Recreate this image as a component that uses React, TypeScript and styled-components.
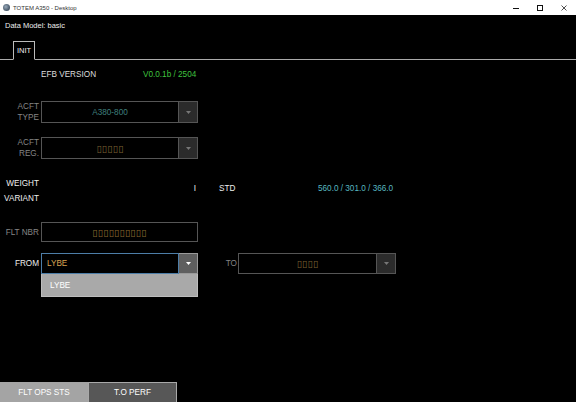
import styled, { createGlobalStyle } from "styled-components";

const GlobalStyle = createGlobalStyle`
  html, body {
    margin: 0;
    padding: 0;
    background: #000;
  }
  body {
    font-family: "Liberation Sans", Arial, sans-serif;
    font-size: 8.2px;
  }
`;

const Window = styled.div`
  width: 576px;
  height: 100vh;
  display: flex;
  flex-direction: column;
  background: #000;
  color: #eee;
  overflow: hidden;
`;

const TitleBar = styled.div`
  height: 15px;
  flex: none;
  display: flex;
  align-items: center;
  background: #fff;
  color: #333;
  font-size: 6px;
`;

const AppIcon = styled.span`
  width: 7px;
  height: 7px;
  margin: 0 3px 0 3px;
  border-radius: 50%;
  background: radial-gradient(circle at 40% 40%, #9ab 0, #456 70%);
`;

const Controls = styled.div`
  margin-left: auto;
  display: flex;
`;

const Control = styled.span`
  width: 24px;
  height: 15px;
  display: flex;
  align-items: center;
  justify-content: center;
`;

const Header = styled.div`
  height: 20px;
  flex: none;
  display: flex;
  align-items: center;
  padding-left: 5px;
  font-size: 7.5px;
`;

const TabStrip = styled.div`
  flex: none;
  display: flex;
  margin-top: 6px;
  padding-left: 13px;
  border-bottom: 1px solid #aaa;
`;

const Tab = styled.div`
  width: 20px;
  height: 17px;
  margin-bottom: -1px;
  display: flex;
  align-items: center;
  justify-content: center;
  border: 1px solid #bbb;
  border-bottom: 1px solid #000;
  background: #000;
  font-size: 7.5px;
`;

const Form = styled.div`
  display: flex;
  flex-direction: column;
`;

const Row = styled.div<{ $top: number; $h: number }>`
  display: grid;
  grid-template-columns: 39px 157px 1fr;
  column-gap: 2px;
  align-items: center;
  margin-top: ${(p) => p.$top}px;
  height: ${(p) => p.$h}px;
`;

const Label = styled.div<{ $dim?: boolean }>`
  text-align: right;
  white-space: nowrap;
  line-height: ${(p) => (p.$dim ? 11 : 15)}px;
  color: ${(p) => (p.$dim ? "#858585" : "#eee")};
`;

const Version = styled.div`
  display: flex;
  align-items: center;
  color: #ddd;
`;

const VersionName = styled.span`
  width: 102px;
`;

const VersionValue = styled.span`
  color: #3fc23f;
`;

const Field = styled.div`
  position: relative;
  display: flex;
  height: 100%;
`;

const Box = styled.div<{ $active?: boolean; $left?: boolean; $color: string }>`
  flex: 1;
  display: flex;
  align-items: center;
  justify-content: ${(p) => (p.$left ? "flex-start" : "center")};
  padding-left: ${(p) => (p.$left ? 5 : 0)}px;
  border: 1px solid ${(p) => (p.$active ? "#4d7ea8" : "#555")};
  color: ${(p) => p.$color};
`;

const Placeholder = styled.span`
  font-family: "DejaVu Sans", sans-serif;
  font-size: 9.5px;
  letter-spacing: 0.2px;
`;

const DropButton = styled.div<{ $active?: boolean }>`
  width: 18px;
  display: flex;
  align-items: center;
  justify-content: center;
  background: ${(p) => (p.$active ? "#5f5f5f" : "#2b2b2b")};
  border: 1px solid ${(p) => (p.$active ? "#9a9a9a" : "#555")};
  border-left: none;
`;

const DropList = styled.div`
  position: absolute;
  top: 100%;
  left: 0;
  right: 0;
  height: 22px;
  display: flex;
  align-items: center;
  padding-left: 8px;
  background: #a9a9a9;
  border: 1px solid #bdbdbd;
  border-top: none;
  color: #fff;
  z-index: 2;
`;

const Variant = styled.div`
  display: flex;
  justify-content: flex-end;
  padding-right: 2px;
  margin-bottom: 5px;
`;

const VariantInfo = styled.div`
  display: flex;
  margin-bottom: 5px;
  padding-left: 19px;
`;

const VariantName = styled.span`
  width: 99px;
`;

const VariantValues = styled.span`
  color: #57b8c0;
`;

const Destination = styled.div`
  display: flex;
  height: 100%;
  align-items: center;
`;

const DestLabel = styled.span`
  width: 37px;
  margin-right: 1px;
  text-align: right;
  color: #858585;
`;

const DestField = styled.div`
  width: 158px;
  height: 100%;
`;

const BottomTabs = styled.div`
  margin-top: auto;
  display: flex;
  height: 20px;
  flex: none;
`;

const BottomTab = styled.div<{ $active?: boolean; $w: number }>`
  width: ${(p) => p.$w}px;
  display: flex;
  align-items: center;
  justify-content: center;
  box-sizing: border-box;
  background: ${(p) => (p.$active ? "#a4a4a4" : "#575757")};
  border: 1px solid ${(p) => (p.$active ? "#a4a4a4" : "#a9a9a9")};
  border-bottom: none;
  color: #fff;
`;

const Arrow = ({ color }: { color: string }) => (
  <svg width="5" height="3" viewBox="0 0 5 3">
    <path d="M0 0H5L2.5 3Z" fill={color} />
  </svg>
);

type SelectProps = {
  value: React.ReactNode;
  color: string;
  active?: boolean;
  left?: boolean;
  list?: string;
};

const Select = ({ value, color, active, left, list }: SelectProps) => (
  <Field>
    <Box $active={active} $left={left} $color={color}>
      {value}
    </Box>
    <DropButton $active={active}>
      <Arrow color={active ? "#fff" : "#777"} />
    </DropButton>
    {list && <DropList>{list}</DropList>}
  </Field>
);

export default function App() {
  return (
    <>
      <GlobalStyle />
      <Window>
        <TitleBar>
          <AppIcon />
          TOTEM A350 - Desktop
          <Controls>
            <Control>
              <svg width="6" height="6" viewBox="0 0 6 6">
                <path d="M0 3.5H6" stroke="#111" strokeWidth="1" />
              </svg>
            </Control>
            <Control>
              <svg width="6" height="6" viewBox="0 0 6 6">
                <rect x="0.5" y="0.5" width="5" height="5" fill="none" stroke="#111" strokeWidth="1" />
              </svg>
            </Control>
            <Control>
              <svg width="6" height="6" viewBox="0 0 6 6">
                <path d="M0.5 0.5L5.5 5.5M5.5 0.5L0.5 5.5" stroke="#222" strokeWidth="0.8" />
              </svg>
            </Control>
          </Controls>
        </TitleBar>

        <Header>Data Model: basic</Header>

        <TabStrip>
          <Tab>INIT</Tab>
        </TabStrip>

        <Form>
          <Row $top={0} $h={29}>
            <span />
            <Version>
              <VersionName>EFB VERSION</VersionName>
              <VersionValue>V0.0.1b / 2504</VersionValue>
            </Version>
          </Row>

          <Row $top={12} $h={21}>
            <Label $dim>
              ACFT
              <br />
              TYPE
            </Label>
            <Select value="A380-800" color="#3f7f7c" />
          </Row>

          <Row $top={15} $h={21}>
            <Label $dim>
              ACFT
              <br />
              REG.
            </Label>
            <Select value={<Placeholder>▯▯▯▯▯</Placeholder>} color="#7d6334" />
          </Row>

          <Row $top={18} $h={30}>
            <Label>
              WEIGHT
              <br />
              VARIANT
            </Label>
            <Variant>I</Variant>
            <VariantInfo>
              <VariantName>STD</VariantName>
              <VariantValues>560.0 / 301.0 / 366.0</VariantValues>
            </VariantInfo>
          </Row>

          <Row $top={16} $h={20}>
            <Label $dim>FLT NBR</Label>
            <Field>
              <Box $color="#8c6a30">
                <Placeholder>▯▯▯▯▯▯▯▯▯▯</Placeholder>
              </Box>
            </Field>
          </Row>

          <Row $top={11} $h={21}>
            <Label>FROM</Label>
            <Select value="LYBE" color="#d9a452" active left list="LYBE" />
            <Destination>
              <DestLabel>TO</DestLabel>
              <DestField>
                <Select value={<Placeholder>▯▯▯▯</Placeholder>} color="#7d6334" />
              </DestField>
            </Destination>
          </Row>
        </Form>

        <BottomTabs>
          <BottomTab $active $w={88}>
            FLT OPS STS
          </BottomTab>
          <BottomTab $w={89}>T.O PERF</BottomTab>
        </BottomTabs>
      </Window>
    </>
  );
}
